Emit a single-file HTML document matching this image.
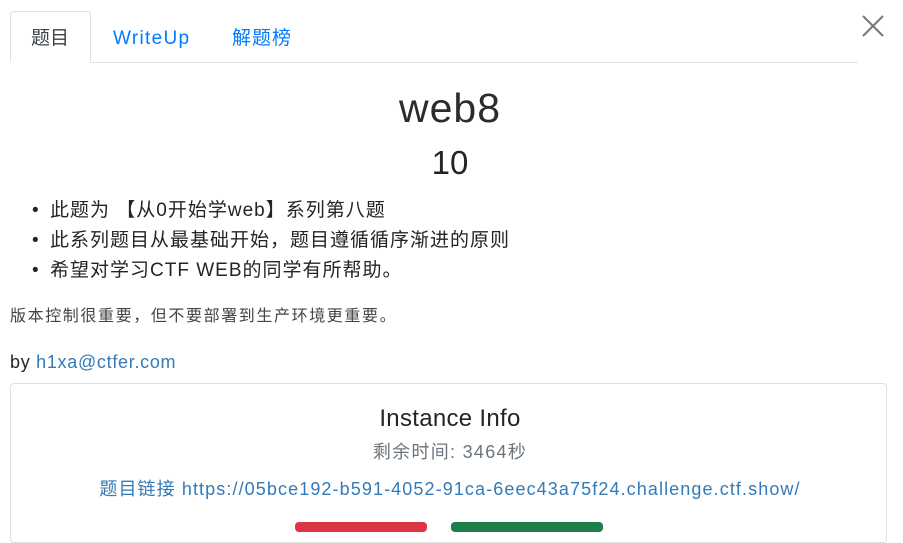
<!DOCTYPE html>
<html><head><meta charset="utf-8"><style>
body{margin:0;width:903px;height:526px;overflow:hidden;background:#fff;font-family:"Liberation Sans","Noto Sans CJK SC",sans-serif;color:#212529;position:relative}
.a{position:absolute;white-space:nowrap}
.tabs{position:absolute;left:10px;top:62px;width:848px;border-top:1px solid #dee2e6}
.tab{position:absolute;left:10px;top:11px;width:81px;height:52px;border:1px solid #dee2e6;border-bottom:1px solid #fff;border-radius:4px 4px 0 0;background:#fff;box-sizing:border-box}
.blue{color:#007bff}
.link{color:#337ab7}
.card{position:absolute;left:10px;top:383px;width:877px;height:160px;border:1px solid #e0e0e0;border-radius:4px;box-sizing:border-box}
.t{top:27px;line-height:24px;font-size:19px}
</style></head><body>
<div class="tabs"></div>
<div class="tab"></div>
<div class="a t" style="left:31px;color:#3c4248">题目</div>
<div class="a t blue" style="left:113px;letter-spacing:1.3px">WriteUp</div>
<div class="a t blue" style="left:232px;letter-spacing:1px">解题榜</div>
<svg class="a" style="left:862px;top:15px" width="22" height="22"><path d="M1 1L21 21M21 1L1 21" stroke="#777" stroke-width="2"/></svg>
<div class="a" style="left:0;width:900px;text-align:center;top:86px;font-size:41px;line-height:44px;letter-spacing:1px;color:#2a2d30">web8</div>
<div class="a" style="left:0;width:900px;text-align:center;top:144px;font-size:33px;line-height:38px">10</div>
<div class="a" style="left:32px;top:196px;font-size:19px;line-height:30px;letter-spacing:1px">
<div><span style="display:inline-block;width:18px">•</span>此题为 【从0开始学web】系列第八题</div>
<div><span style="display:inline-block;width:18px">•</span>此系列题目从最基础开始，题目遵循循序渐进的原则</div>
<div><span style="display:inline-block;width:18px">•</span>希望对学习CTF WEB的同学有所帮助。</div>
</div>
<div class="a" style="left:10px;top:307px;font-size:16px;line-height:20px;letter-spacing:1.6px;color:#444">版本控制很重要，但不要部署到生产环境更重要。</div>
<div class="a" style="left:10px;top:351px;font-size:18px;line-height:22px;letter-spacing:0.7px">by <span class="link">h1xa@ctfer.com</span></div>
<div class="card"></div>
<div class="a" style="left:0;width:900px;text-align:center;top:405px;font-size:24px;line-height:28px;letter-spacing:0.3px">Instance Info</div>
<div class="a" style="left:0;width:900px;text-align:center;top:441px;font-size:18px;line-height:22px;letter-spacing:1.3px;color:#6c757d">剩余时间: 3464秒</div>
<div class="a link" style="left:0;width:900px;text-align:center;top:478px;font-size:18px;line-height:22px;letter-spacing:1.1px">题目链接 https://05bce192-b591-4052-91ca-6eec43a75f24.challenge.ctf.show/</div>
<div class="a" style="left:295px;top:522px;width:132px;height:10px;background:#dc3545;border-radius:4px"></div>
<div class="a" style="left:451px;top:522px;width:152px;height:10px;background:#1e7e4a;border-radius:4px"></div>
</body></html>
